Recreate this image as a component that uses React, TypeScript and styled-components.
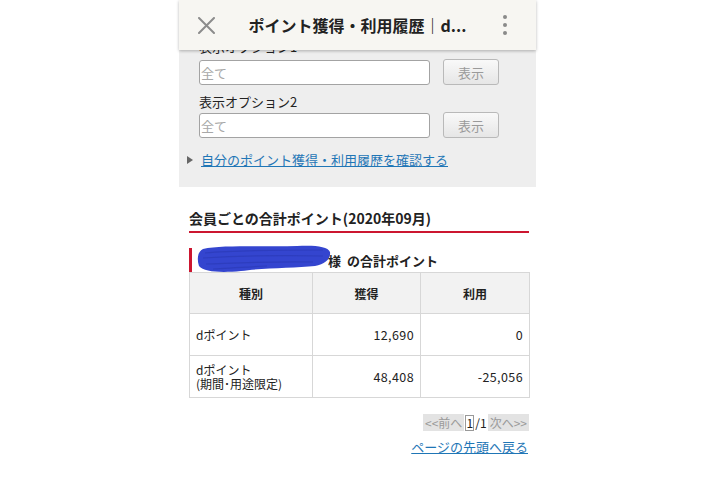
import React from "react";
import styled, { createGlobalStyle } from "styled-components";

const GlobalStyle = createGlobalStyle`
  html, body { margin: 0; padding: 0; background: #ffffff; }
  body { font-family: "Noto Sans CJK JP", "Noto Sans", sans-serif; color: #222; }
  * { box-sizing: border-box; }
`;

const Screen = styled.div`
  width: 357px;
  margin: 0 auto;
  background: #ffffff;
`;

const TopBar = styled.header`
  position: relative;
  z-index: 2;
  height: 50px;
  display: grid;
  grid-template-columns: 56px 1fr 56px;
  align-items: center;
  background: #f7f6f2;
  box-shadow: 0 1px 3px rgba(0, 0, 0, 0.28);
`;

const CloseIcon = styled.svg`
  margin-left: 19px;
  display: block;
`;

const Title = styled.h1`
  margin: 0;
  font-size: 16px;
  font-weight: 700;
  color: #222;
  text-align: center;
  white-space: nowrap;
`;

const Kebab = styled.div`
  justify-self: end;
  margin-right: 29px;
  display: flex;
  flex-direction: column;
  gap: 4px;
`;

const Dot = styled.span`
  width: 4px;
  height: 4px;
  border-radius: 50%;
  background: #8a8a8a;
`;

const FilterPanel = styled.section`
  height: 137px;
  overflow: hidden;
  background: #eeeeee;
  padding: 0 20px;
`;

const FieldGroup = styled.div<{ $offset: number }>`
  margin-top: ${(p) => p.$offset}px;
`;

const FieldLabel = styled.div<{ $gap?: number }>`
  font-size: 13px;
  line-height: 20px;
  color: #222;
  margin-bottom: ${(p) => p.$gap ?? 0}px;
`;

const FieldRow = styled.div`
  display: flex;
  align-items: center;
  gap: 13px;
  height: 26px;
`;

const SelectBox = styled.div`
  width: 231px;
  height: 25px;
  border: 1px solid #a3a3a3;
  border-radius: 3px;
  background: #fff;
  font-size: 13px;
  line-height: 23px;
  color: #a8a8a8;
  padding-left: 1px;
`;

const ShowButton = styled.button`
  width: 56px;
  height: 26px;
  border: 1px solid #b9b9b9;
  border-radius: 3px;
  background: linear-gradient(#f9f9f9, #e6e6e6);
  font-family: inherit;
  font-size: 13px;
  color: #9a9a9a;
  padding: 0;
`;

const LinkRow = styled.div`
  margin-top: 12px;
  margin-left: -12px;
  display: flex;
  align-items: center;
  gap: 8px;
  line-height: 20px;
`;

const Triangle = styled.span`
  width: 0;
  height: 0;
  border-left: 6px solid #666;
  border-top: 4px solid transparent;
  border-bottom: 4px solid transparent;
`;

const TextLink = styled.a`
  font-size: 13px;
  color: #1f76b6;
  text-decoration: underline;
`;

const Content = styled.main`
  padding: 21px 7px 40px 10px;
`;

const SectionHeading = styled.h2`
  margin: 0;
  font-size: 14px;
  font-weight: 700;
  line-height: 20px;
  padding-bottom: 3px;
  border-bottom: 2px solid #cc1630;
  color: #222;
`;

const SubHeading = styled.div`
  margin-top: 15px;
  height: 24px;
  display: flex;
  align-items: center;
  border-left: 3px solid #cc1630;
  padding-left: 5px;
  font-size: 13px;
  font-weight: 700;
  color: #222;
`;

const Scribble = styled.svg`
  flex: none;
  margin-right: -3px;
  margin-top: -4px;
`;

const PointTable = styled.table`
  width: 340px;
  border-collapse: collapse;
  table-layout: fixed;
  font-size: 12px;
  color: #222;
`;

const HeadCell = styled.th<{ $w: number }>`
  width: ${(p) => p.$w}px;
  height: 41px;
  background: #f2f2f2;
  border: 1px solid #d7d7d7;
  font-weight: 700;
  text-align: center;
  padding: 0;
`;

const Cell = styled.td<{ $num?: boolean }>`
  height: 42px;
  border: 1px solid #d7d7d7;
  padding: 0 6px;
  text-align: ${(p) => (p.$num ? "right" : "left")};
  font-size: ${(p) => (p.$num ? "12.5px" : "12px")};
  line-height: 14px;
  letter-spacing: ${(p) => (p.$num ? "0.4px" : "0")};
`;

const CellLine = styled.span`
  display: block;
`;

const Pager = styled.nav`
  margin-top: 16px;
  display: flex;
  justify-content: flex-end;
  align-items: center;
  font-size: 12px;
  height: 17px;
`;

const PagerButton = styled.span`
  height: 17px;
  line-height: 17px;
  padding: 0 2px;
  background: #e3e3e3;
  color: #9a9a9a;
`;

const PageBox = styled.span`
  display: inline-block;
  width: 9px;
  height: 16px;
  line-height: 14px;
  border: 1px solid #999;
  background: #fff;
  text-align: center;
  color: #222;
  font-size: 12px;
  margin: 0 1px;
`;

const PageTotal = styled.span`
  color: #222;
  padding-right: 1px;
`;

const BackLink = styled.div`
  margin-top: 4px;
  text-align: right;
  line-height: 20px;
  padding-right: 1px;
`;

export default function App() {
  return (
    <>
      <GlobalStyle />
      <Screen>
        <TopBar>
          <CloseIcon width="17" height="17" viewBox="0 0 17 17">
            <path d="M1 1 L16 16 M16 1 L1 16" stroke="#8c8c8c" strokeWidth="2" strokeLinecap="round" />
          </CloseIcon>
          <Title>ポイント獲得・利用履歴｜d...</Title>
          <Kebab>
            <Dot />
            <Dot />
            <Dot />
          </Kebab>
        </TopBar>

        <FilterPanel>
          <FieldGroup $offset={-13}>
            <FieldLabel $gap={2}>表示オプション1</FieldLabel>
            <FieldRow>
              <SelectBox>全て</SelectBox>
              <ShowButton>表示</ShowButton>
            </FieldRow>
          </FieldGroup>
          <FieldGroup $offset={7}>
            <FieldLabel>表示オプション2</FieldLabel>
            <FieldRow>
              <SelectBox>全て</SelectBox>
              <ShowButton>表示</ShowButton>
            </FieldRow>
          </FieldGroup>
          <LinkRow>
            <Triangle />
            <TextLink>自分のポイント獲得・利用履歴を確認する</TextLink>
          </LinkRow>
        </FilterPanel>

        <Content>
          <SectionHeading>会員ごとの合計ポイント(2020年09月)</SectionHeading>
          <SubHeading>
            <Scribble width="134" height="29" viewBox="0 0 134 29">
              <path
                d="M6 5 C 24 1, 60 3, 100 2 C 116 1, 131 2, 133 8 C 134 15, 128 20, 118 22 C 98 24, 64 24, 44 27 C 24 29, 7 28, 2 22 C 0 16, 0 8, 6 5 Z"
                fill="#3445cf"
              />
              <path
                d="M8 9 C 40 6, 80 6, 126 6 M6 14 C 40 12, 80 11, 126 12 M9 20 C 40 19, 80 17, 116 18 M16 25 C 30 24, 50 23, 70 22"
                stroke="#2836b0"
                strokeWidth="1.2"
                fill="none"
                opacity="0.55"
              />
            </Scribble>
            <span>様&nbsp;&nbsp;の合計ポイント</span>
          </SubHeading>

          <PointTable>
            <thead>
              <tr>
                <HeadCell $w={123}>種別</HeadCell>
                <HeadCell $w={108}>獲得</HeadCell>
                <HeadCell $w={109}>利用</HeadCell>
              </tr>
            </thead>
            <tbody>
              <tr>
                <Cell>dポイント</Cell>
                <Cell $num>12,690</Cell>
                <Cell $num>0</Cell>
              </tr>
              <tr>
                <Cell>
                  <CellLine>dポイント</CellLine>
                  <CellLine>(期間･用途限定)</CellLine>
                </Cell>
                <Cell $num>48,408</Cell>
                <Cell $num>-25,056</Cell>
              </tr>
            </tbody>
          </PointTable>

          <Pager>
            <PagerButton>&lt;&lt;前へ</PagerButton>
            <PageBox>1</PageBox>
            <PageTotal>/1</PageTotal>
            <PagerButton>次へ&gt;&gt;</PagerButton>
          </Pager>
          <BackLink>
            <TextLink>ページの先頭へ戻る</TextLink>
          </BackLink>
        </Content>
      </Screen>
    </>
  );
}
